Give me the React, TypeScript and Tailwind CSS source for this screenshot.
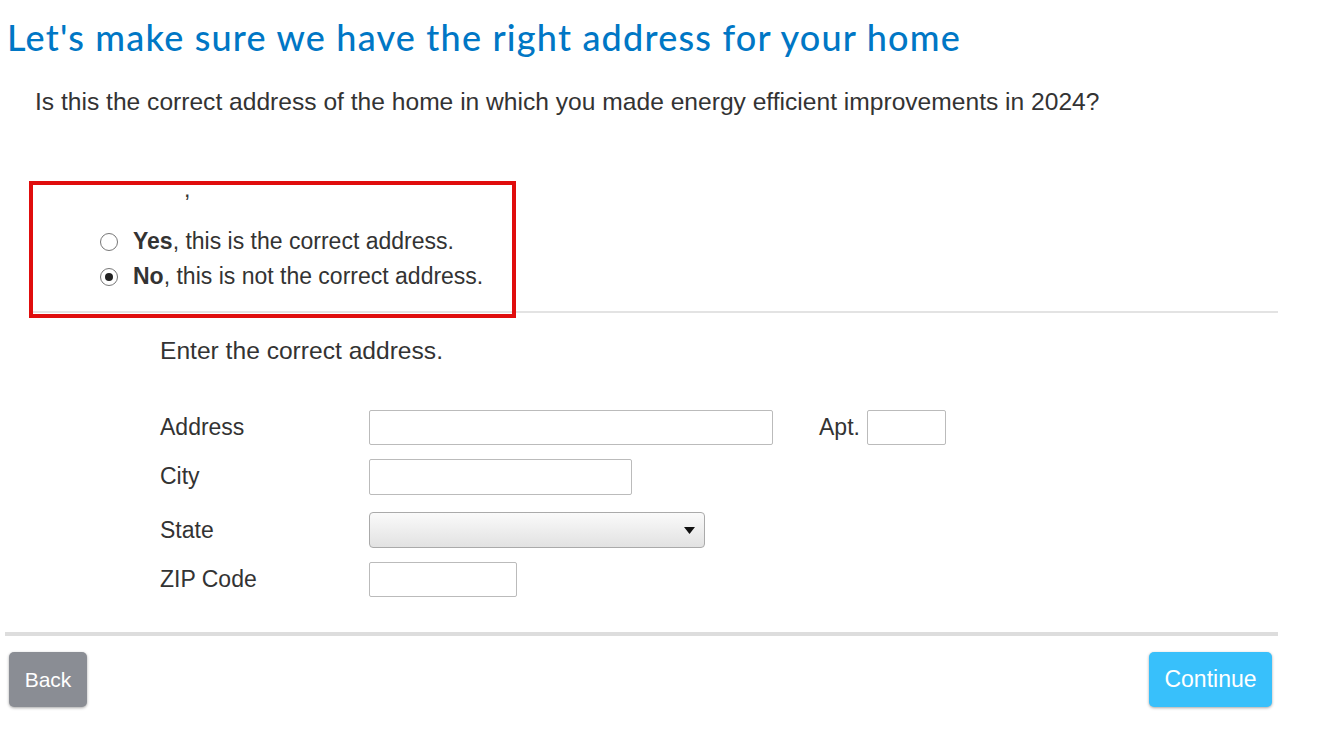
export default function App() {
  return (
    <div className="relative w-[1343px] h-[742px] bg-white text-[#333] font-['Liberation_Sans',Arial,sans-serif]">
      <h1 className="pl-[7px] pt-[13px] text-[36px] leading-[48px] text-[#0077c5] font-['Lato',sans-serif] font-medium tracking-[1.2px]">
        Let's make sure we have the right address for your home
      </h1>
      <p className="pl-[35px] pt-[27px] text-[24.6px] leading-[28px]">
        Is this the correct address of the home in which you made energy efficient improvements in 2024?
      </p>

      <div className="pl-[100px] pt-[64px] text-[23px] leading-[35px]">
        <div className="pl-[84px] h-[18px] leading-[18px]">,</div>
        <div className="pt-[26px]">
          <label className="flex items-center gap-[15px]">
            <span className="w-[18px] h-[18px] rounded-full border border-[#777] bg-white" />
            <span><b>Yes</b>, this is the correct address.</span>
          </label>
          <label className="flex items-center gap-[15px]">
            <span className="w-[18px] h-[18px] rounded-full border border-[#777] bg-white flex items-center justify-center">
              <span className="w-[8px] h-[8px] rounded-full bg-[#222]" />
            </span>
            <span><b>No</b>, this is not the correct address.</span>
          </label>
        </div>
      </div>

      <div className="ml-[30px] mt-[17px] w-[1248px] h-[2px] bg-[#e3e3e3]" />

      <div className="pl-[160px] pt-[24px] text-[23px]">
        <p className="leading-[28px] text-[24.6px]">Enter the correct address.</p>
        <div className="pt-[45px] flex flex-col gap-[15px]">
          <div className="flex items-center h-[34px]">
            <span className="w-[209px]">Address</span>
            <span className="w-[404px] h-[35px] border border-[#bbb] rounded-[2px]" />
            <span className="ml-[46px] w-[48px]">Apt.</span>
            <span className="w-[79px] h-[35px] border border-[#bbb] rounded-[2px]" />
          </div>
          <div className="flex items-center h-[35px]">
            <span className="w-[209px]">City</span>
            <span className="w-[263px] h-[36px] border border-[#bbb] rounded-[2px]" />
          </div>
          <div className="flex items-center h-[36px] mt-[3px]">
            <span className="w-[209px]">State</span>
            <span className="w-[336px] h-[36px] border border-[#aaa] rounded-[4px] bg-gradient-to-b from-[#fafafa] to-[#e2e2e2] flex items-center justify-end pr-[9px]">
              <svg width="11" height="7" viewBox="0 0 11 7"><path d="M0 0h11L5.5 7z" fill="#111" /></svg>
            </span>
          </div>
          <div className="flex items-center h-[35px] -mt-[1px]">
            <span className="w-[209px]">ZIP Code</span>
            <span className="w-[148px] h-[35px] border border-[#bbb] rounded-[2px]" />
          </div>
        </div>
      </div>

      <div className="ml-[5px] mt-[35px] w-[1273px] h-[4px] bg-[#dddddd]" />

      <div className="flex justify-between pl-[9px] pr-[71px] pt-[16px]">
        <button className="w-[78px] h-[55px] rounded-[5px] bg-[#8a8d94] text-white text-[21px] shadow-[0_1px_3px_rgba(0,0,0,0.35)]">Back</button>
        <button className="w-[123px] h-[55px] rounded-[5px] bg-[#38c0fb] text-white text-[23px] shadow-[0_1px_3px_rgba(0,0,0,0.35)]">Continue</button>
      </div>

      <div className="absolute left-[29px] top-[181px] w-[487px] h-[137px] border-[4px] border-[#e00d0d]" />
    </div>
  );
}
